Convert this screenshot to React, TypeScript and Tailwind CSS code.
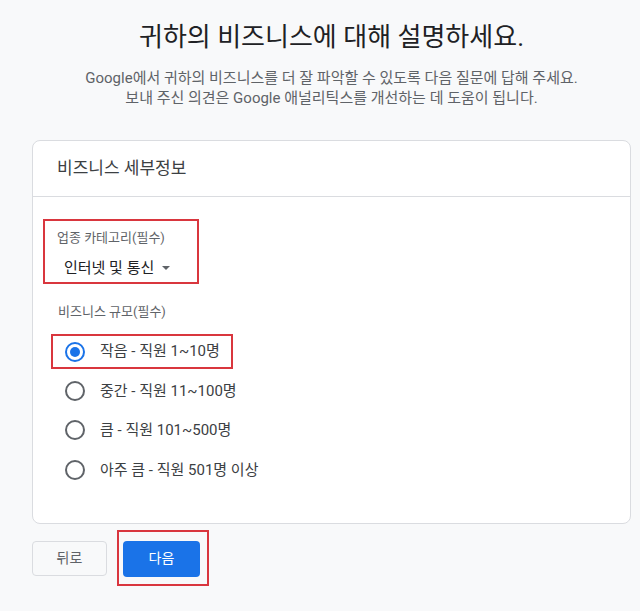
import React from 'react'

const FONT = 'font-["Roboto","Noto_Sans_CJK_KR",sans-serif]'

const sizes = [
  { id: 'small', label: '작음 - 직원 1~10명' },
  { id: 'medium', label: '중간 - 직원 11~100명' },
  { id: 'large', label: '큼 - 직원 101~500명' },
  { id: 'xlarge', label: '아주 큼 - 직원 501명 이상' }
]

function Radio({ checked }: { checked: boolean }) {
  return (
    <span
      className={`flex h-[20px] w-[20px] shrink-0 items-center justify-center rounded-full border-2 ${
        checked ? 'border-[#1a73e8]' : 'border-[#5f6368]'
      }`}
    >
      {checked && <span className="h-[10px] w-[10px] rounded-full bg-[#1a73e8]" />}
    </span>
  )
}

export default function App() {
  const selected = 'small'

  return (
    <div className={`min-h-[611px] bg-[#f8f9fa] ${FONT}`}>
      <div className="ml-[32px] w-[599px] pt-[20px]">
        <h1 className="text-center text-[26px] leading-[34px] text-[#202124]">
          귀하의 비즈니스에 대해 설명하세요.
        </h1>
        <p className="mt-[14px] text-center text-[15px] leading-[20px] text-[#5f6368]">
          Google에서 귀하의 비즈니스를 더 잘 파악할 수 있도록 다음 질문에 답해 주세요.
          <br />
          보내 주신 의견은 Google 애널리틱스를 개선하는 데 도움이 됩니다.
        </p>

        <div className="mt-[32px] rounded-[8px] border border-[#dadce0] bg-white">
          <div className="flex h-[56px] items-center border-b border-[#dadce0] px-[24px] text-[17px] text-[#3c4043]">
            비즈니스 세부정보
          </div>

          <div className="px-[10px] pb-[31px] pt-[22px]">
            <div className="flex h-[65px] w-[156px] flex-col border-2 border-[#d9363e] pl-[12px] pt-[9px]">
              <span className="text-[13px] leading-[16px] text-[#5f6368]">업종 카테고리(필수)</span>
              <button className="mt-[12px] flex items-center gap-[8px] pl-[7px] text-[15px] leading-[20px] text-[#202124]">
                인터넷 및 통신
                <svg width="8" height="4" viewBox="0 0 8 4">
                  <path d="M0 0h8L4 4z" fill="#5f6368" />
                </svg>
              </button>
            </div>

            <div className="mt-[20px] pl-[15px] text-[13px] leading-[16px] text-[#5f6368]">
              비즈니스 규모(필수)
            </div>

            <div className="mt-[14px] flex flex-col">
              {sizes.map((s) => (
                <div
                  key={s.id}
                  className={`mb-[4px] flex items-center gap-[15px] whitespace-nowrap pl-[12px] text-[15px] text-[#3c4043] ${
                    s.id === selected
                      ? 'ml-[8px] h-[35px] w-[182px] border-2 border-[#d9363e]'
                      : 'ml-[10px] h-[35.5px]'
                  }`}
                >
                  <Radio checked={s.id === selected} />
                  {s.label}
                </div>
              ))}
            </div>
          </div>
        </div>

        <div className="mt-[6px] flex items-start gap-[10px]">
          <button className="mt-[11px] h-[35px] w-[75px] rounded-[4px] border border-[#dadce0] text-[14px] text-[#5f6368]">
            뒤로
          </button>
          <div className="border-2 border-[#d9363e] pb-[7px] pl-[4px] pr-[7px] pt-[9px]">
            <button className="h-[36px] w-[77px] rounded-[4px] bg-[#1a73e8] text-[14px] text-white">
              다음
            </button>
          </div>
        </div>
      </div>
    </div>
  )
}
